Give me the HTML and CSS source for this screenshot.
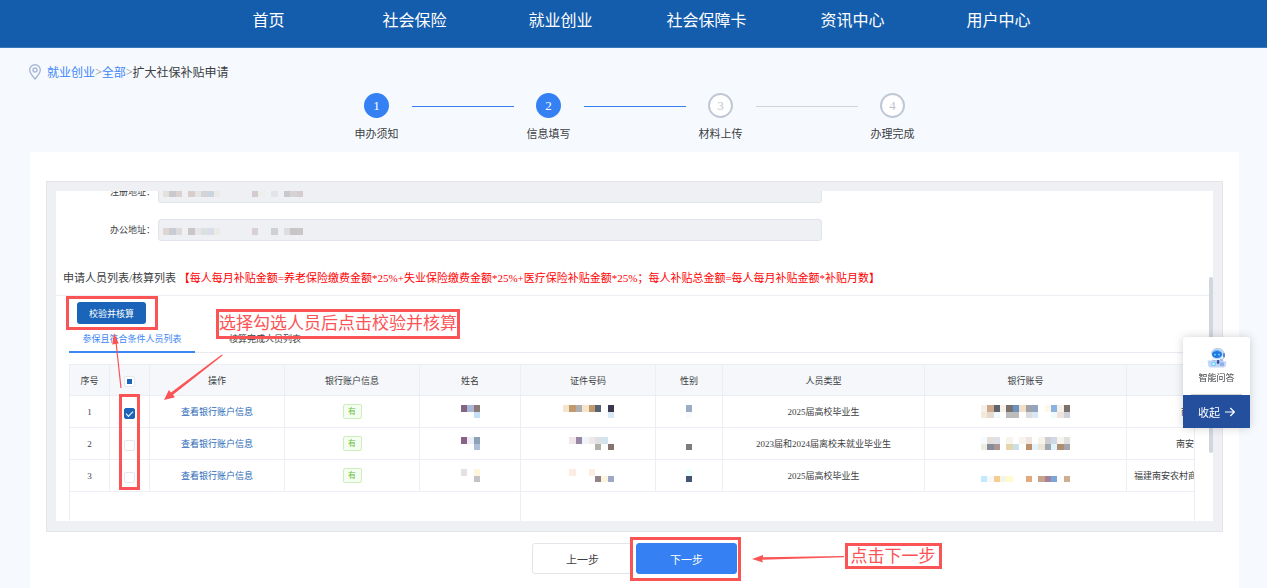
FILE: index.html
```html
<!DOCTYPE html>
<html lang="zh-CN">
<head>
    <meta charset="UTF-8">
    <meta name="viewport" content="width=device-width, initial-scale=1.0">
    <title>扩大社保补贴申请</title>
    <link rel="stylesheet" href="styles.css">
</head>
<body>

    <header class="header">
        <nav class="nav">
            <a href="#">首页</a>
            <a href="#">社会保险</a>
            <a href="#">就业创业</a>
            <a href="#">社会保障卡</a>
            <a href="#">资讯中心</a>
            <a href="#">用户中心</a>
        </nav>
    </header>

    <div class="breadcrumb">
        <svg class="pin" viewBox="0 0 12 16" fill="none" stroke="#a9b8d6" stroke-width="1.4">
            <path d="M6 15C4 12.300 .7 9.500 .7 6.100a5.300 5.300 0 0 1 10.600 0C11.300 9.500 8 12.300 6 15z"/>
            <circle cx="6" cy="6" r="2"/>
        </svg>
        <a href="#">就业创业</a>&gt;<a href="#">全部</a>&gt;<span class="current">扩大社保补贴申请</span>
    </div>

    <ol class="steps">
        <li class="step done"><span class="num">1</span><span class="name">申办须知</span></li>
        <li class="line done"></li>
        <li class="step done"><span class="num">2</span><span class="name">信息填写</span></li>
        <li class="line done"></li>
        <li class="step"><span class="num">3</span><span class="name">材料上传</span></li>
        <li class="line"></li>
        <li class="step"><span class="num">4</span><span class="name">办理完成</span></li>
    </ol>

    <main class="panel">
        <div class="frame">
            <div class="view">
                <form class="form">
                    <div class="row">
                        <label for="regAddr">注册地址：</label>
                        <div class="field">
                            <input type="text" id="regAddr" disabled>
                            <svg class="mask" width="140" height="7" viewBox="0 0 22 1" preserveAspectRatio="none" shape-rendering="crispEdges">
                                <path fill="#e3e0de" d="M0 0h1v1H0z"/><path fill="#c8cacd" d="M1 0h1v1H1z"/><path fill="#dad1d0" d="M2 0h1v1H2z"/>
                                <path fill="#d8cec9" d="M4 0h1v1H4z"/><path fill="#e5e5e5" d="M5 0h1v1H5z"/><path fill="#d2d4d5" d="M6 0h1v1H6z"/><path fill="#cbd5e0" d="M7 0h1v1H7z"/><path fill="#eaebe9" d="M8 0h1v1H8z"/>
                                <path fill="#d3cbcd" d="M14 0h1v1h-1z"/><path fill="#edefeb" d="M15 0h1v1h-1z"/><path fill="#e2e4e9" d="M17 0h1v1h-1z"/>
                                <path fill="#c9c9cd" d="M19 0h1v1h-1z"/><path fill="#d6d3d2" d="M20 0h1v1h-1z"/><path fill="#d5cccd" d="M21 0h1v1h-1z"/>
                            </svg>
                        </div>
                    </div>
                    <div class="row">
                        <label for="workAddr">办公地址：</label>
                        <div class="field">
                            <input type="text" id="workAddr" disabled>
                            <svg class="mask" width="140" height="7" viewBox="0 0 22 1" preserveAspectRatio="none" shape-rendering="crispEdges">
                                <path fill="#ddd6d2" d="M0 0h1v1H0z"/><path fill="#c9ccd0" d="M1 0h1v1H1z"/><path fill="#dddadb" d="M2 0h1v1H2z"/>
                                <path fill="#c9c6c5" d="M4 0h1v1H4z"/><path fill="#e5e6e7" d="M5 0h1v1H5z"/><path fill="#dde0e0" d="M6 0h1v1H6z"/><path fill="#d8dde7" d="M7 0h1v1H7z"/><path fill="#eaebe9" d="M8 0h1v1H8z"/>
                                <path fill="#d8d0d2" d="M14 0h1v1h-1z"/><path fill="#cfd0d4" d="M17 0h1v1h-1z"/>
                                <path fill="#dedcdc" d="M19 0h1v1h-1z"/><path fill="#c6c5c7" d="M20 0h1v1h-1z"/><path fill="#cbc6c8" d="M21 0h1v1h-1z"/>
                            </svg>
                        </div>
                    </div>
                </form>

                <h2 class="title">申请人员列表/核算列表 <span>【每人每月补贴金额=养老保险缴费金额*25%+失业保险缴费金额*25%+医疗保险补贴金额*25%；每人补贴总金额=每人每月补贴金额*补贴月数】</span></h2>

                <div class="list">
                    <button type="button" class="check-btn">校验并核算</button>
                    <div class="tabs">
                        <button type="button" class="tab active">参保且符合条件人员列表</button>
                        <button type="button" class="tab">核算完成人员列表</button>
                    </div>

                    <table class="table">
                        <colgroup>
                            <col class="w-s"><col class="w-s"><col class="w-l"><col class="w-l"><col class="w-m">
                            <col class="w-l"><col class="w-g"><col class="w-xl"><col class="w-xl"><col>
                        </colgroup>
                        <thead>
                            <tr>
                                <th>序号</th>
                                <th><input type="checkbox" class="part" aria-label="全选"></th>
                                <th>操作</th>
                                <th>银行账户信息</th>
                                <th>姓名</th>
                                <th>证件号码</th>
                                <th>性别</th>
                                <th>人员类型</th>
                                <th>银行账号</th>
                                <th></th>
                            </tr>
                        </thead>
                        <tbody>
                            <tr>
                                <td>1</td>
                                <td><input type="checkbox" aria-label="选择1" checked></td>
                                <td><a href="#">查看银行账户信息</a></td>
                                <td><span class="tag">有</span></td>
                                <td><svg width="19" height="13" viewBox="0 0 3 2" preserveAspectRatio="none" shape-rendering="crispEdges"><path fill="#836580" d="M0 0h1v1H0z"/><path fill="#a9b6d6" d="M1 0h1v1H1z"/><path fill="#8a7a79" d="M2 0h1v1H2z"/><path fill="#c5dff8" d="M2 1h1v1H2z"/></svg></td>
                                <td><svg width="51" height="13" viewBox="0 0 8 2" preserveAspectRatio="none" shape-rendering="crispEdges"><path fill="#f6e5cd" d="M0 0h1v1H0zM3 0h1v1H3z"/><path fill="#c0996c" d="M1 0h1v1H1zM4 0h1v1H4z"/><path fill="#aeafb1" d="M2 0h1v1H2z"/><path fill="#566273" d="M5 0h1v1H5z"/><path fill="#3a364d" d="M7 0h1v1H7z"/><path fill="#d7e9f5" d="M7 1h1v1H7z"/></svg></td>
                                <td><svg width="6" height="13" viewBox="0 0 1 2" preserveAspectRatio="none" shape-rendering="crispEdges"><path fill="#9badc4" d="M0 0h1v1H0z"/><path fill="#f8fafd" d="M0 1h1v1H0z"/></svg></td>
                                <td>2025届高校毕业生</td>
                                <td><svg width="89" height="13" viewBox="0 0 14 2" preserveAspectRatio="none" shape-rendering="crispEdges"><path fill="#f5f1ea" d="M0 0h1v1H0zM3 0h1v1H3zM12 0h1v1h-1z"/><path fill="#cda88b" d="M1 0h1v1H1z"/><path fill="#5e626d" d="M2 0h1v1H2z"/><path fill="#7a716c" d="M4 0h1v1H4zM13 0h1v1h-1z"/><path fill="#6b93c1" d="M5 0h1v1H5z"/><path fill="#f4e0c9" d="M6 0h1v1H6z"/><path fill="#9fa3a3" d="M7 0h1v1H7z"/><path fill="#93a4c2" d="M8 0h1v1H8z"/><path fill="#fef8e7" d="M10 0h1v1h-1z"/><path fill="#8bb2e2" d="M11 0h1v1h-1z"/><path fill="#f4e8da" d="M0 1h1v1H0z"/><path fill="#e4dacf" d="M1 1h1v1H1z"/><path fill="#effaff" d="M2 1h1v1H2zM11 1h1v1h-1z"/><path fill="#bcbcbd" d="M4 1h2v1H4z"/><path fill="#dcdbe0" d="M7 1h1v1H7z"/><path fill="#d9e6f4" d="M8 1h1v1H8z"/><path fill="#f0e3dd" d="M12 1h1v1h-1z"/><path fill="#cdd1dc" d="M13 1h1v1h-1z"/></svg></td>
                                <td class="bank short">南</td>
                            </tr>
                            <tr>
                                <td>2</td>
                                <td><input type="checkbox" aria-label="选择2"></td>
                                <td><a href="#">查看银行账户信息</a></td>
                                <td><span class="tag">有</span></td>
                                <td><svg width="19" height="13" viewBox="0 0 3 2" preserveAspectRatio="none" shape-rendering="crispEdges"><path fill="#8a6187" d="M0 0h1v1H0z"/><path fill="#edeef4" d="M1 0h1v1H1z"/><path fill="#8fa1b8" d="M2 0h1v1H2z"/><path fill="#adc0d7" d="M2 1h1v1H2z"/></svg></td>
                                <td><svg width="51" height="13" viewBox="0 0 8 2" preserveAspectRatio="none" shape-rendering="crispEdges"><path fill="#efe8e9" d="M1 0h1v1H1zM4 0h1v1H4z"/><path fill="#9588a5" d="M2 0h1v1H2z"/><path fill="#f1f5f9" d="M3 0h1v1H3z"/><path fill="#dfe1e3" d="M5 0h1v1H5z"/><path fill="#d4e4ef" d="M6 0h1v1H6z"/><path fill="#b3b1a9" d="M5 1h1v1H5z"/><path fill="#83746f" d="M7 1h1v1H7z"/></svg></td>
                                <td><svg width="6" height="13" viewBox="0 0 1 2" preserveAspectRatio="none" shape-rendering="crispEdges"><path fill="#7e7b79" d="M0 1h1v1H0z"/></svg></td>
                                <td>2023届和2024届离校未就业毕业生</td>
                                <td><svg width="89" height="13" viewBox="0 0 14 2" preserveAspectRatio="none" shape-rendering="crispEdges"><path fill="#f6fbff" d="M0 0h1v1H0z"/><path fill="#e5dfda" d="M1 0h1v1H1z"/><path fill="#dde2ea" d="M2 0h1v1H2z"/><path fill="#f9f3ed" d="M4 0h1v1H4zM6 0h1v1H6zM9 0h1v1H9zM12 0h1v1h-1z"/><path fill="#f0e6e1" d="M7 0h1v1H7z"/><path fill="#cfcecf" d="M10 0h1v1h-1z"/><path fill="#ced8e6" d="M11 0h1v1h-1z"/><path fill="#e0e0df" d="M13 0h1v1h-1z"/><path fill="#ebede2" d="M0 1h1v1H0z"/><path fill="#868c99" d="M1 1h1v1H1z"/><path fill="#ab9696" d="M2 1h1v1H2z"/><path fill="#e5d5ad" d="M4 1h1v1H4z"/><path fill="#cae1eb" d="M5 1h1v1H5z"/><path fill="#bd9069" d="M7 1h1v1H7z"/><path fill="#e3f3fe" d="M8 1h1v1H8zM11 1h1v1h-1z"/><path fill="#ebe5d7" d="M9 1h1v1H9z"/><path fill="#9fa8b0" d="M10 1h1v1h-1z"/><path fill="#ad8e71" d="M12 1h1v1h-1z"/><path fill="#a6a5ad" d="M13 1h1v1h-1z"/></svg></td>
                                <td class="bank">南安</td>
                            </tr>
                            <tr>
                                <td>3</td>
                                <td><input type="checkbox" aria-label="选择3"></td>
                                <td><a href="#">查看银行账户信息</a></td>
                                <td><span class="tag">有</span></td>
                                <td><svg width="19" height="13" viewBox="0 0 3 2" preserveAspectRatio="none" shape-rendering="crispEdges"><path fill="#e8e0e7" d="M0 0h1v1H0z"/><path fill="#fdf5dc" d="M2 0h1v1H2z"/><path fill="#c3c3c8" d="M2 1h1v1H2z"/></svg></td>
                                <td><svg width="51" height="13" viewBox="0 0 8 2" preserveAspectRatio="none" shape-rendering="crispEdges"><path fill="#fbede3" d="M1 0h1v1H1zM4 0h1v1H4z"/><path fill="#94828b" d="M5 1h1v1H5z"/><path fill="#fdf4de" d="M6 1h1v1H6z"/><path fill="#9fa8c8" d="M7 1h1v1H7z"/></svg></td>
                                <td><svg width="6" height="13" viewBox="0 0 1 2" preserveAspectRatio="none" shape-rendering="crispEdges"><path fill="#eefdfd" d="M0 0h1v1H0z"/><path fill="#435573" d="M0 1h1v1H0z"/></svg></td>
                                <td>2025届高校毕业生</td>
                                <td><svg width="89" height="13" viewBox="0 0 14 2" preserveAspectRatio="none" shape-rendering="crispEdges"><path fill="#c2eafe" d="M0 1h1v1H0z"/><path fill="#f6f8f9" d="M1 1h1v1H1z"/><path fill="#f6cd90" d="M2 1h1v1H2z"/><path fill="#f5f5e6" d="M3 1h1v1H3z"/><path fill="#fefbcf" d="M4 1h1v1H4z"/><path fill="#e2aa7c" d="M7 1h1v1H7z"/><path fill="#c7a38c" d="M9 1h1v1H9z"/><path fill="#a5829b" d="M10 1h1v1h-1z"/><path fill="#7ba6da" d="M11 1h1v1h-1z"/><path fill="#cfad90" d="M13 1h1v1h-1z"/></svg></td>
                                <td class="bank long">福建南安农村商</td>
                            </tr>
                        </tbody>
                        <tfoot>
                            <tr>
                                <td colspan="5"></td>
                                <td colspan="5"></td>
                            </tr>
                        </tfoot>
                    </table>
                </div>
            </div>
            <div class="thumb"></div>

            <!-- 操作提示 -->
            <div class="mark mark-check"></div>
            <div class="mark mark-select"></div>
            <div class="mark mark-tip">选择勾选人员后点击校验并核算</div>
            <svg class="arrows" width="200" height="240" viewBox="0 0 200 240" fill="#fb5456">
                <path d="M73.400 206 68.600 162 65.200 162.600 67 151 71.800 161.600 69.800 161.800 74.600 206z"/>
                <path d="M175.600 173.500 126 212.800 128 215.300 117 218 121.900 208 124 210.600 174.800 172.600z"/>
            </svg>
        </div>

        <div class="actions">
            <button type="button" class="btn">上一步</button>
            <button type="button" class="btn primary">下一步</button>
            <div class="mark mark-next"></div>
            <svg class="arrow-next" width="92" height="10" viewBox="0 0 92 10" fill="#fb5456">
                <path d="M92 3 11 4.300 11 2 0 6 11 9.500 10 6.800 92 4.200z"/>
            </svg>
            <div class="mark mark-go">点击下一步</div>
        </div>
    </main>

    <aside class="chat">
        <a class="robot" href="#">
            <svg width="20" height="21" viewBox="0 0 20 21">
                <path d="M4.500 6.500A6.300 6 0 0 1 17 7.500" fill="none" stroke="#b4c0da" stroke-width="1.200"/>
                <ellipse cx="10.500" cy="7" rx="6" ry="5.500" fill="#c9dbf6"/>
                <ellipse cx="10" cy="7.300" rx="5" ry="3.800" fill="#1e78e2"/>
                <path d="M6.500 4.800c2-1.600 5-1.600 7 0" fill="none" stroke="#6fb4f6" stroke-width="1.200"/>
                <circle cx="8" cy="7.600" r=".9" fill="#8fe0ff"/>
                <circle cx="12" cy="7.600" r=".9" fill="#8fe0ff"/>
                <rect x="16" y="6" width="2" height="4.500" rx="1" fill="#5d86d6"/>
                <path d="M17 10.500c-.5 1.500-2 2-4 2.200" fill="none" stroke="#8aa8e2"/>
                <path d="M5 12.500c3 1 8 1 11 0l1 4H4z" fill="#a9c0ec"/>
                <path d="M.5 13.500h5l1.500 1h12.500l-1 5-1.500 1H3l-1.500-1z" fill="#c3d5f4"/>
                <path d="M4 15h5v4H4z" fill="#7fd0fb"/>
                <path d="M5.500 16h2v2h-2z" fill="#d8f1ff"/>
                <path d="M13 15.500h4v3.500h-4z" fill="#8fb0ea"/>
                <path d="M10.200 13h1.800l.5 3-1.400 1.200-1.400-1.200z" fill="#3a4f9c"/>
            </svg>
            <span>智能问答</span>
        </a>
        <button type="button" class="fold">收起
            <svg width="10" height="10" viewBox="0 0 10 10" fill="none" stroke="#fff" stroke-width="1.200"><path d="M0 5h9.300M5.300 1l4 4-4 4"/></svg>
        </button>
    </aside>

</body>
</html>
```
FILE: styles.css
```css
* {
    box-sizing: border-box;
}
body {
    display: flex;
    flex-direction: column;
    min-height: 100vh;
    margin: 0;
    font-family: "Liberation Serif", "Noto Sans CJK SC", serif;
    font-size: 9px;
    color: #3c3e42;
    background-color: #f6faff;
}
a {
    text-decoration: none;
}
button, input {
    font-family: inherit;
    margin: 0;
}
button {
    cursor: pointer;
}

/* header */
.header {
    height: 48px;
    background-color: #145dac;
    border-bottom: 1px solid #3a78bc;
}
.nav {
    display: flex;
    justify-content: center;
}
.nav a {
    width: 146px;
    line-height: 42px;
    font-size: 16px;
    text-align: center;
    color: #fff;
}

.breadcrumb {
    display: flex;
    align-items: center;
    height: 24px;
    margin-top: 12px;
    padding-left: 29px;
    font-size: 12px;
    color: #777;
}
.breadcrumb a {
    color: #3d86f6;
}
.breadcrumb .current {
    color: #3c3e42;
}
.pin {
    width: 12px;
    height: 16px;
    margin-right: 6px;
}

/* steps */
.steps {
    display: flex;
    justify-content: center;
    list-style: none;
    margin: 9px 0 0;
    padding: 0 0 0 2px;
    height: 59px;
}
.step {
    display: flex;
    flex-direction: column;
    align-items: center;
    width: 70px;
}
.num {
    width: 25px;
    height: 25px;
    line-height: 21px;
    border: 2px solid #c0c8d4;
    border-radius: 50%;
    background-color: #fff;
    font-size: 13px;
    text-align: center;
    color: #c0c4cc;
}
.step.done .num {
    border-color: #3581f4;
    background-color: #3581f4;
    color: #fff;
}
.name {
    margin-top: 8px;
    line-height: 16px;
    font-size: 11px;
}
.line {
    width: 102px;
    height: 1px;
    margin-top: 13px;
    background-color: #d0d4d8;
}
.line.done {
    background-color: #3581f4;
}

/* panel */
.panel {
    flex: 1;
    margin: 0 28px 0 30px;
    padding: 29px 16px 8px;
    background-color: #fff;
}
.frame {
    position: relative;
    padding: 9px 9px 10px;
    background-color: #eff0f4;
    border: 1px solid #e3e5e8;
}
.view {
    height: 330px;
    overflow: hidden;
    background-color: #fff;
}
.form {
    margin-top: -10px;
}
.row {
    display: flex;
    align-items: center;
    height: 22px;
    margin-bottom: 16px;
}
.row label {
    width: 102px;
    padding: 0 3px 2px 0;
    text-align: right;
}
.field {
    position: relative;
    width: 58%;
    max-width: 664px;
}
.field input {
    display: block;
    width: 100%;
    height: 22px;
    border: 1px solid #e0e3e9;
    border-radius: 3px;
    background-color: #eff0f4;
}
.mask {
    position: absolute;
    left: 5px;
    top: 9px;
}
.title {
    margin: 0;
    padding: 13px 0 9px 7px;
    line-height: 16px;
    font-size: 11px;
    font-weight: normal;
    white-space: nowrap;
    border-bottom: 1px solid #ebeef2;
}
.title span {
    color: #f00;
}
.list {
    padding: 6px 18px 0 13px;
}
.check-btn {
    display: block;
    width: 69px;
    height: 22px;
    margin-left: 8px;
    padding: 0;
    border: 0;
    border-radius: 3px;
    background-color: #1a65b9;
    font-size: 9px;
    color: #fff;
}
.tabs {
    display: flex;
    height: 29px;
    margin-bottom: 11px;
    border-bottom: 1px solid #e8ebf1;
}
.tab {
    width: 126px;
    height: 29px;
    padding: 2px 0 0;
    border: 0;
    border-bottom: 2px solid transparent;
    background: none;
    font-size: 9px;
    color: #3c3e42;
}
.tab.active {
    border-bottom-color: #3d86f6;
    color: #3d86f6;
}
.tab + .tab {
    margin-left: 7px;
}

/* table */
.table {
    width: 100%;
    table-layout: fixed;
    border-collapse: separate;
    border-spacing: 0;
    border: 1px solid #ebeef5;
    border-bottom: 0;
}
.w-s { width: 40px; }
.w-m { width: 101px; }
.w-g { width: 67px; }
.w-l { width: 135px; }
.w-xl { width: 202px; }
.table th, .table td {
    height: 32px;
    padding: 0;
    border-right: 1px solid #ebeef5;
    border-bottom: 1px solid #ebeef5;
    font-weight: normal;
    text-align: center;
    vertical-align: middle;
    white-space: nowrap;
}
.table th {
    height: 31px;
    background-color: #f5f7fa;
}
.table th:last-child, .table td:last-child {
    border-right: 0;
}
.table tfoot td {
    border-bottom: 0;
}
.table a {
    color: #2a69b8;
}
.table svg {
    display: block;
    margin: 0 auto;
}
.table .bank {
    overflow: hidden;
    text-align: right;
}
.table .short {
    padding-right: 4px;
}
.table .long {
    padding-left: 7px;
    text-align: left;
}
.table input {
    appearance: none;
    display: block;
    width: 11px;
    height: 11px;
    margin: 3px auto 0;
    border: 1px solid #e4e7ed;
    border-radius: 2px;
    background-color: #fff;
}
.table input:checked {
    border-color: #1a65b9;
    background-color: #1a65b9;
}
.table input:checked::after {
    content: "";
    display: block;
    width: 6px;
    height: 3px;
    margin: 2px 0 0 1px;
    border-left: 1px solid #fff;
    border-bottom: 1px solid #fff;
    transform: rotate(-45deg);
}
.table .part::after {
    content: "";
    display: block;
    width: 5px;
    height: 5px;
    margin: 2px;
    background-color: #1a65b9;
}
.tag {
    display: inline-block;
    width: 19px;
    height: 15px;
    line-height: 13px;
    border: 1px solid #cdeebd;
    border-radius: 2px;
    background-color: #f4fdef;
    font-size: 8px;
    color: #67c23a;
}
.thumb {
    position: absolute;
    top: 95px;
    right: 9px;
    width: 4px;
    height: 176px;
    border-radius: 2px;
    background-color: #d0d7de;
}

/* marks over the page */
.mark {
    position: absolute;
    border: 3px solid #fb5456;
    font-size: 17px;
    text-align: center;
    white-space: nowrap;
    color: #fb5456;
    pointer-events: none;
}
.mark-check {
    left: 19px;
    top: 114px;
    width: 92px;
    height: 34px;
}
.mark-select {
    left: 72px;
    top: 212px;
    width: 21px;
    height: 96px;
}
.mark-tip {
    left: 169px;
    top: 127px;
    width: 244px;
    height: 30px;
    line-height: 24px;
}
.arrows {
    position: absolute;
    left: 0;
    top: 0;
    pointer-events: none;
}
.mark-next {
    left: 50%;
    top: -6px;
    width: 111px;
    height: 44px;
    margin-left: -5px;
}
.arrow-next {
    position: absolute;
    left: 50%;
    top: 10px;
    margin-left: 117px;
}
.mark-go {
    left: 50%;
    top: 0;
    width: 97px;
    height: 26px;
    margin-left: 210px;
    line-height: 22px;
}
.actions {
    position: relative;
    display: flex;
    justify-content: center;
    gap: 3px;
    margin-top: 11px;
}
.btn {
    width: 101px;
    height: 31px;
    padding: 0;
    border: 1px solid #e2e5ea;
    border-radius: 3px;
    background-color: #fff;
    font-size: 11px;
    color: #3c3e42;
}
.btn.primary {
    border-color: #3581f4;
    background-color: #3581f4;
    color: #fff;
}

/* chat */
.chat {
    position: fixed;
    top: 337px;
    right: 17px;
    width: 67px;
    border-radius: 3px;
    background-color: #fff;
    box-shadow: 0 0 10px rgba(0, 0, 0, 0.18);
}
.robot {
    display: flex;
    flex-direction: column;
    align-items: center;
    height: 58px;
    margin: 0 8px;
    padding-top: 10px;
    line-height: 20px;
    border-bottom: 1px solid #cfd2d6;
    color: #3c3e42;
}
.fold {
    display: flex;
    align-items: center;
    justify-content: center;
    gap: 5px;
    width: 100%;
    height: 33px;
    padding: 0;
    border: 0;
    background-color: #234f9c;
    font-size: 11px;
    color: #fff;
}
```
